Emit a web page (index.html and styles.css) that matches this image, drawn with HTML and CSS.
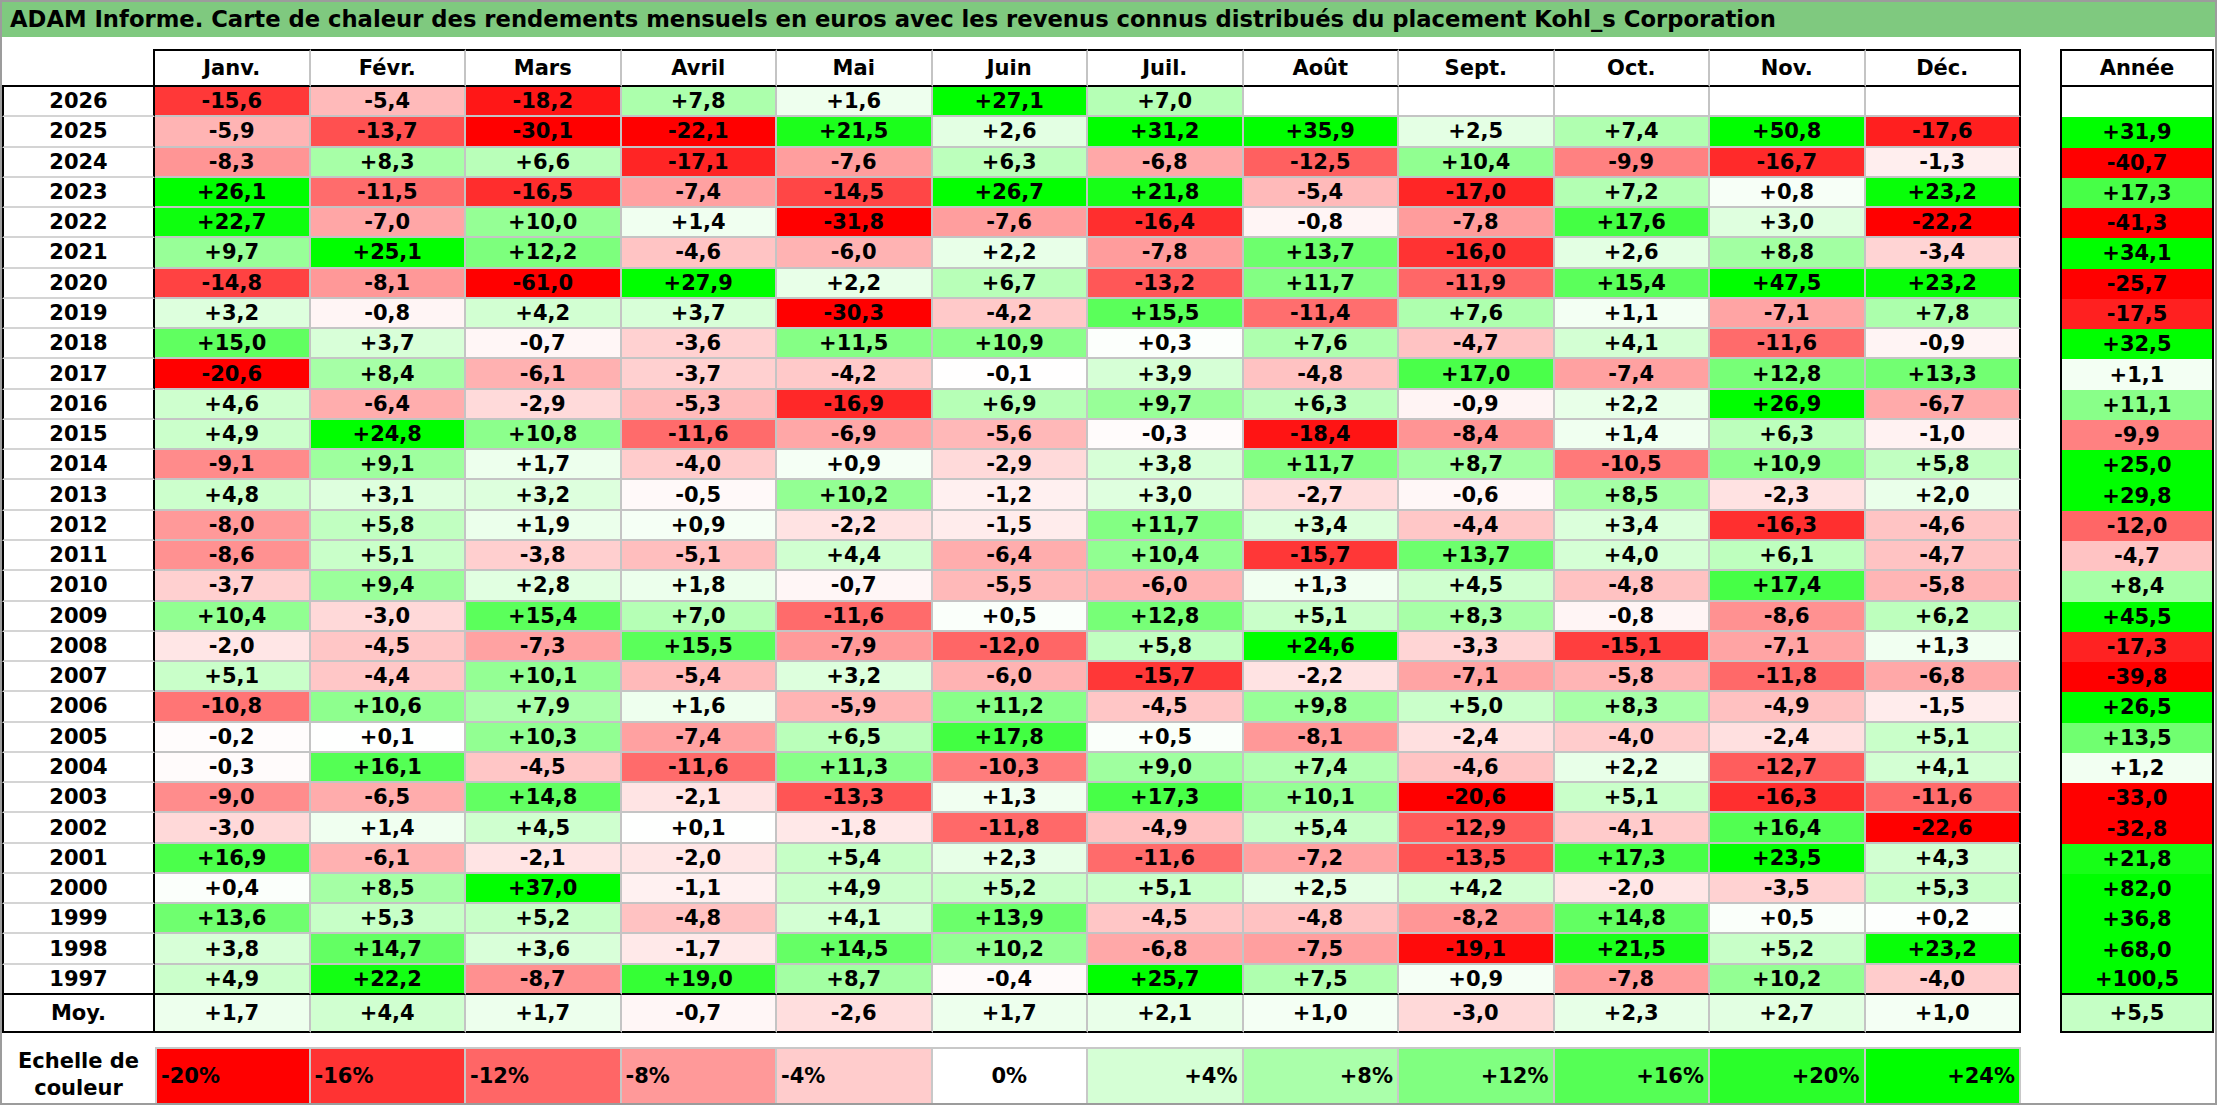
FILE: index.html
```html
<!DOCTYPE html>
<html lang="fr">
<head>
<meta charset="utf-8">
<title>ADAM Informe</title>
<link rel="stylesheet" href="styles.css">
</head>
<body>
<div class="sheet">
  <div class="title">ADAM Informe. Carte de chaleur des rendements mensuels en euros avec les revenus connus distribués du placement Kohl_s Corporation</div>
  <div class="tables">
    <div class="heat">
      <div class="row head"><div class="corner"></div><div>Janv.</div><div>Févr.</div><div>Mars</div><div>Avril</div><div>Mai</div><div>Juin</div><div>Juil.</div><div>Août</div><div>Sept.</div><div>Oct.</div><div>Nov.</div><div>Déc.</div></div>
      <div class="row"><div class="yr">2026</div><div class="v">-15,6</div><div class="v">-5,4</div><div class="v">-18,2</div><div class="v">+7,8</div><div class="v">+1,6</div><div class="v">+27,1</div><div class="v">+7,0</div><div class="v"></div><div class="v"></div><div class="v"></div><div class="v"></div><div class="v"></div></div>
      <div class="row"><div class="yr">2025</div><div class="v">-5,9</div><div class="v">-13,7</div><div class="v">-30,1</div><div class="v">-22,1</div><div class="v">+21,5</div><div class="v">+2,6</div><div class="v">+31,2</div><div class="v">+35,9</div><div class="v">+2,5</div><div class="v">+7,4</div><div class="v">+50,8</div><div class="v">-17,6</div></div>
      <div class="row"><div class="yr">2024</div><div class="v">-8,3</div><div class="v">+8,3</div><div class="v">+6,6</div><div class="v">-17,1</div><div class="v">-7,6</div><div class="v">+6,3</div><div class="v">-6,8</div><div class="v">-12,5</div><div class="v">+10,4</div><div class="v">-9,9</div><div class="v">-16,7</div><div class="v">-1,3</div></div>
      <div class="row"><div class="yr">2023</div><div class="v">+26,1</div><div class="v">-11,5</div><div class="v">-16,5</div><div class="v">-7,4</div><div class="v">-14,5</div><div class="v">+26,7</div><div class="v">+21,8</div><div class="v">-5,4</div><div class="v">-17,0</div><div class="v">+7,2</div><div class="v">+0,8</div><div class="v">+23,2</div></div>
      <div class="row"><div class="yr">2022</div><div class="v">+22,7</div><div class="v">-7,0</div><div class="v">+10,0</div><div class="v">+1,4</div><div class="v">-31,8</div><div class="v">-7,6</div><div class="v">-16,4</div><div class="v">-0,8</div><div class="v">-7,8</div><div class="v">+17,6</div><div class="v">+3,0</div><div class="v">-22,2</div></div>
      <div class="row"><div class="yr">2021</div><div class="v">+9,7</div><div class="v">+25,1</div><div class="v">+12,2</div><div class="v">-4,6</div><div class="v">-6,0</div><div class="v">+2,2</div><div class="v">-7,8</div><div class="v">+13,7</div><div class="v">-16,0</div><div class="v">+2,6</div><div class="v">+8,8</div><div class="v">-3,4</div></div>
      <div class="row"><div class="yr">2020</div><div class="v">-14,8</div><div class="v">-8,1</div><div class="v">-61,0</div><div class="v">+27,9</div><div class="v">+2,2</div><div class="v">+6,7</div><div class="v">-13,2</div><div class="v">+11,7</div><div class="v">-11,9</div><div class="v">+15,4</div><div class="v">+47,5</div><div class="v">+23,2</div></div>
      <div class="row"><div class="yr">2019</div><div class="v">+3,2</div><div class="v">-0,8</div><div class="v">+4,2</div><div class="v">+3,7</div><div class="v">-30,3</div><div class="v">-4,2</div><div class="v">+15,5</div><div class="v">-11,4</div><div class="v">+7,6</div><div class="v">+1,1</div><div class="v">-7,1</div><div class="v">+7,8</div></div>
      <div class="row"><div class="yr">2018</div><div class="v">+15,0</div><div class="v">+3,7</div><div class="v">-0,7</div><div class="v">-3,6</div><div class="v">+11,5</div><div class="v">+10,9</div><div class="v">+0,3</div><div class="v">+7,6</div><div class="v">-4,7</div><div class="v">+4,1</div><div class="v">-11,6</div><div class="v">-0,9</div></div>
      <div class="row"><div class="yr">2017</div><div class="v">-20,6</div><div class="v">+8,4</div><div class="v">-6,1</div><div class="v">-3,7</div><div class="v">-4,2</div><div class="v">-0,1</div><div class="v">+3,9</div><div class="v">-4,8</div><div class="v">+17,0</div><div class="v">-7,4</div><div class="v">+12,8</div><div class="v">+13,3</div></div>
      <div class="row"><div class="yr">2016</div><div class="v">+4,6</div><div class="v">-6,4</div><div class="v">-2,9</div><div class="v">-5,3</div><div class="v">-16,9</div><div class="v">+6,9</div><div class="v">+9,7</div><div class="v">+6,3</div><div class="v">-0,9</div><div class="v">+2,2</div><div class="v">+26,9</div><div class="v">-6,7</div></div>
      <div class="row"><div class="yr">2015</div><div class="v">+4,9</div><div class="v">+24,8</div><div class="v">+10,8</div><div class="v">-11,6</div><div class="v">-6,9</div><div class="v">-5,6</div><div class="v">-0,3</div><div class="v">-18,4</div><div class="v">-8,4</div><div class="v">+1,4</div><div class="v">+6,3</div><div class="v">-1,0</div></div>
      <div class="row"><div class="yr">2014</div><div class="v">-9,1</div><div class="v">+9,1</div><div class="v">+1,7</div><div class="v">-4,0</div><div class="v">+0,9</div><div class="v">-2,9</div><div class="v">+3,8</div><div class="v">+11,7</div><div class="v">+8,7</div><div class="v">-10,5</div><div class="v">+10,9</div><div class="v">+5,8</div></div>
      <div class="row"><div class="yr">2013</div><div class="v">+4,8</div><div class="v">+3,1</div><div class="v">+3,2</div><div class="v">-0,5</div><div class="v">+10,2</div><div class="v">-1,2</div><div class="v">+3,0</div><div class="v">-2,7</div><div class="v">-0,6</div><div class="v">+8,5</div><div class="v">-2,3</div><div class="v">+2,0</div></div>
      <div class="row"><div class="yr">2012</div><div class="v">-8,0</div><div class="v">+5,8</div><div class="v">+1,9</div><div class="v">+0,9</div><div class="v">-2,2</div><div class="v">-1,5</div><div class="v">+11,7</div><div class="v">+3,4</div><div class="v">-4,4</div><div class="v">+3,4</div><div class="v">-16,3</div><div class="v">-4,6</div></div>
      <div class="row"><div class="yr">2011</div><div class="v">-8,6</div><div class="v">+5,1</div><div class="v">-3,8</div><div class="v">-5,1</div><div class="v">+4,4</div><div class="v">-6,4</div><div class="v">+10,4</div><div class="v">-15,7</div><div class="v">+13,7</div><div class="v">+4,0</div><div class="v">+6,1</div><div class="v">-4,7</div></div>
      <div class="row"><div class="yr">2010</div><div class="v">-3,7</div><div class="v">+9,4</div><div class="v">+2,8</div><div class="v">+1,8</div><div class="v">-0,7</div><div class="v">-5,5</div><div class="v">-6,0</div><div class="v">+1,3</div><div class="v">+4,5</div><div class="v">-4,8</div><div class="v">+17,4</div><div class="v">-5,8</div></div>
      <div class="row"><div class="yr">2009</div><div class="v">+10,4</div><div class="v">-3,0</div><div class="v">+15,4</div><div class="v">+7,0</div><div class="v">-11,6</div><div class="v">+0,5</div><div class="v">+12,8</div><div class="v">+5,1</div><div class="v">+8,3</div><div class="v">-0,8</div><div class="v">-8,6</div><div class="v">+6,2</div></div>
      <div class="row"><div class="yr">2008</div><div class="v">-2,0</div><div class="v">-4,5</div><div class="v">-7,3</div><div class="v">+15,5</div><div class="v">-7,9</div><div class="v">-12,0</div><div class="v">+5,8</div><div class="v">+24,6</div><div class="v">-3,3</div><div class="v">-15,1</div><div class="v">-7,1</div><div class="v">+1,3</div></div>
      <div class="row"><div class="yr">2007</div><div class="v">+5,1</div><div class="v">-4,4</div><div class="v">+10,1</div><div class="v">-5,4</div><div class="v">+3,2</div><div class="v">-6,0</div><div class="v">-15,7</div><div class="v">-2,2</div><div class="v">-7,1</div><div class="v">-5,8</div><div class="v">-11,8</div><div class="v">-6,8</div></div>
      <div class="row"><div class="yr">2006</div><div class="v">-10,8</div><div class="v">+10,6</div><div class="v">+7,9</div><div class="v">+1,6</div><div class="v">-5,9</div><div class="v">+11,2</div><div class="v">-4,5</div><div class="v">+9,8</div><div class="v">+5,0</div><div class="v">+8,3</div><div class="v">-4,9</div><div class="v">-1,5</div></div>
      <div class="row"><div class="yr">2005</div><div class="v">-0,2</div><div class="v">+0,1</div><div class="v">+10,3</div><div class="v">-7,4</div><div class="v">+6,5</div><div class="v">+17,8</div><div class="v">+0,5</div><div class="v">-8,1</div><div class="v">-2,4</div><div class="v">-4,0</div><div class="v">-2,4</div><div class="v">+5,1</div></div>
      <div class="row"><div class="yr">2004</div><div class="v">-0,3</div><div class="v">+16,1</div><div class="v">-4,5</div><div class="v">-11,6</div><div class="v">+11,3</div><div class="v">-10,3</div><div class="v">+9,0</div><div class="v">+7,4</div><div class="v">-4,6</div><div class="v">+2,2</div><div class="v">-12,7</div><div class="v">+4,1</div></div>
      <div class="row"><div class="yr">2003</div><div class="v">-9,0</div><div class="v">-6,5</div><div class="v">+14,8</div><div class="v">-2,1</div><div class="v">-13,3</div><div class="v">+1,3</div><div class="v">+17,3</div><div class="v">+10,1</div><div class="v">-20,6</div><div class="v">+5,1</div><div class="v">-16,3</div><div class="v">-11,6</div></div>
      <div class="row"><div class="yr">2002</div><div class="v">-3,0</div><div class="v">+1,4</div><div class="v">+4,5</div><div class="v">+0,1</div><div class="v">-1,8</div><div class="v">-11,8</div><div class="v">-4,9</div><div class="v">+5,4</div><div class="v">-12,9</div><div class="v">-4,1</div><div class="v">+16,4</div><div class="v">-22,6</div></div>
      <div class="row"><div class="yr">2001</div><div class="v">+16,9</div><div class="v">-6,1</div><div class="v">-2,1</div><div class="v">-2,0</div><div class="v">+5,4</div><div class="v">+2,3</div><div class="v">-11,6</div><div class="v">-7,2</div><div class="v">-13,5</div><div class="v">+17,3</div><div class="v">+23,5</div><div class="v">+4,3</div></div>
      <div class="row"><div class="yr">2000</div><div class="v">+0,4</div><div class="v">+8,5</div><div class="v">+37,0</div><div class="v">-1,1</div><div class="v">+4,9</div><div class="v">+5,2</div><div class="v">+5,1</div><div class="v">+2,5</div><div class="v">+4,2</div><div class="v">-2,0</div><div class="v">-3,5</div><div class="v">+5,3</div></div>
      <div class="row"><div class="yr">1999</div><div class="v">+13,6</div><div class="v">+5,3</div><div class="v">+5,2</div><div class="v">-4,8</div><div class="v">+4,1</div><div class="v">+13,9</div><div class="v">-4,5</div><div class="v">-4,8</div><div class="v">-8,2</div><div class="v">+14,8</div><div class="v">+0,5</div><div class="v">+0,2</div></div>
      <div class="row"><div class="yr">1998</div><div class="v">+3,8</div><div class="v">+14,7</div><div class="v">+3,6</div><div class="v">-1,7</div><div class="v">+14,5</div><div class="v">+10,2</div><div class="v">-6,8</div><div class="v">-7,5</div><div class="v">-19,1</div><div class="v">+21,5</div><div class="v">+5,2</div><div class="v">+23,2</div></div>
      <div class="row end"><div class="yr">1997</div><div class="v">+4,9</div><div class="v">+22,2</div><div class="v">-8,7</div><div class="v">+19,0</div><div class="v">+8,7</div><div class="v">-0,4</div><div class="v">+25,7</div><div class="v">+7,5</div><div class="v">+0,9</div><div class="v">-7,8</div><div class="v">+10,2</div><div class="v">-4,0</div></div>
      <div class="row avg"><div class="yr">Moy.</div><div class="v">+1,7</div><div class="v">+4,4</div><div class="v">+1,7</div><div class="v">-0,7</div><div class="v">-2,6</div><div class="v">+1,7</div><div class="v">+2,1</div><div class="v">+1,0</div><div class="v">-3,0</div><div class="v">+2,3</div><div class="v">+2,7</div><div class="v">+1,0</div></div>
    </div>
    <div class="annual">
      <div class="ahead">Année</div>
      <div class="a blank"></div>
      <div class="a v">+31,9</div>
      <div class="a v">-40,7</div>
      <div class="a v">+17,3</div>
      <div class="a v">-41,3</div>
      <div class="a v">+34,1</div>
      <div class="a v">-25,7</div>
      <div class="a v">-17,5</div>
      <div class="a v">+32,5</div>
      <div class="a v">+1,1</div>
      <div class="a v">+11,1</div>
      <div class="a v">-9,9</div>
      <div class="a v">+25,0</div>
      <div class="a v">+29,8</div>
      <div class="a v">-12,0</div>
      <div class="a v">-4,7</div>
      <div class="a v">+8,4</div>
      <div class="a v">+45,5</div>
      <div class="a v">-17,3</div>
      <div class="a v">-39,8</div>
      <div class="a v">+26,5</div>
      <div class="a v">+13,5</div>
      <div class="a v">+1,2</div>
      <div class="a v">-33,0</div>
      <div class="a v">-32,8</div>
      <div class="a v">+21,8</div>
      <div class="a v">+82,0</div>
      <div class="a v">+36,8</div>
      <div class="a v">+68,0</div>
      <div class="a v end">+100,5</div>
      <div class="a v avg">+5,5</div>
    </div>
  </div>
  <div class="legend">
    <div class="lab">Echelle de<br>couleur</div>
    <div class="sw neg" data-v="-20">-20%</div>
    <div class="sw neg" data-v="-16">-16%</div>
    <div class="sw neg" data-v="-12">-12%</div>
    <div class="sw neg" data-v="-8">-8%</div>
    <div class="sw neg" data-v="-4">-4%</div>
    <div class="sw zero" data-v="0">0%</div>
    <div class="sw pos" data-v="4">+4%</div>
    <div class="sw pos" data-v="8">+8%</div>
    <div class="sw pos" data-v="12">+12%</div>
    <div class="sw pos" data-v="16">+16%</div>
    <div class="sw pos" data-v="20">+20%</div>
    <div class="sw pos" data-v="24">+24%</div>
  </div>
</div>
<script src="script.js"></script>
</body>
</html>
```

FILE: styles.css
```css
* { box-sizing: border-box; }

body {
  margin: 0;
  background: #ffffff;
  color: #000000;
  font-family: "DejaVu Sans", "Lato", sans-serif;
  font-weight: 700;
}

.sheet {
  width: 2217px;
  height: 1105px;
  border: 2px solid #9c9c9c;
  overflow: hidden;
}

.title {
  height: 35px;
  background: #7fc97f;
  font-size: 22.7px;
  line-height: 35px;
  padding-left: 8px;
  white-space: nowrap;
}

.tables {
  display: flex;
  gap: 39px;
  margin-top: 12px;
}

.heat {
  display: grid;
  grid-template-columns: 153px repeat(12, 155.5px);
  grid-template-rows: 38px repeat(30, 30.267px) 38px;
}

.annual {
  display: grid;
  grid-template-columns: 154px;
  grid-template-rows: 38px repeat(30, 30.267px) 38px;
}

.row { display: contents; }

.row > div,
.annual > div {
  display: flex;
  align-items: center;
  justify-content: center;
  font-size: 21px;
  white-space: nowrap;
}

.row > .v {
  border-right: 2px solid #c4c4c4;
  border-bottom: 2px solid #c4c4c4;
}

.row > div:last-child { border-right: 2px solid #000; }

.head > div {
  border-top: 2px solid #000;
  border-bottom: 2px solid #000;
  border-right: 2px solid #c4c4c4;
  background: #fff;
}
.head > .corner {
  border-top: none;
  border-right: 2px solid #000;
}

.yr {
  border-left: 2px solid #000;
  border-right: 2px solid #000;
  border-bottom: 2px solid #d4d4d4;
  background: #fff;
}

.row.end > div { border-bottom: 2px solid #000; }
.row.avg > div { border-bottom: 2px solid #000; }

.annual > div {
  border-left: 2px solid #000;
  border-right: 2px solid #000;
}
.annual > .ahead {
  border-top: 2px solid #000;
  border-bottom: 2px solid #000;
}
.annual > .end { border-bottom: 2px solid #000; }
.annual > .avg { border-bottom: 2px solid #000; }

.legend {
  display: grid;
  grid-template-columns: 153px repeat(12, 155.5px);
  height: 56px;
  margin-top: 14px;
}

.legend .lab {
  display: flex;
  align-items: center;
  justify-content: center;
  text-align: center;
  font-size: 21px;
  line-height: 27px;
}

.legend .sw {
  display: flex;
  align-items: center;
  font-size: 21px;
  padding: 0 4px;
  border-top: 2px solid #c8c8c8;
  border-right: 2px solid #c8c8c8;
}
.legend .lab + .sw { border-left: 2px solid #c8c8c8; }
.legend .neg { justify-content: flex-start; }
.legend .zero { justify-content: center; }
.legend .pos { justify-content: flex-end; }
```

FILE: script.js
```js
function heat(v) {
  if (isNaN(v) || v === 0) return "#ffffff";
  if (v < 0) {
    var t = Math.min(-v / 20, 1);
    var c = Math.round(255 * (1 - t));
    return "rgb(255," + c + "," + c + ")";
  }
  var t2 = Math.min(v / 24, 1);
  var c2 = Math.round(255 * (1 - t2));
  return "rgb(" + c2 + ",255," + c2 + ")";
}

document.querySelectorAll(".v").forEach(function (el) {
  var txt = el.textContent.trim();
  if (!txt) return;
  el.style.backgroundColor = heat(parseFloat(txt.replace(",", ".")));
});

document.querySelectorAll("[data-v]").forEach(function (el) {
  el.style.backgroundColor = heat(parseFloat(el.getAttribute("data-v")));
});
```
